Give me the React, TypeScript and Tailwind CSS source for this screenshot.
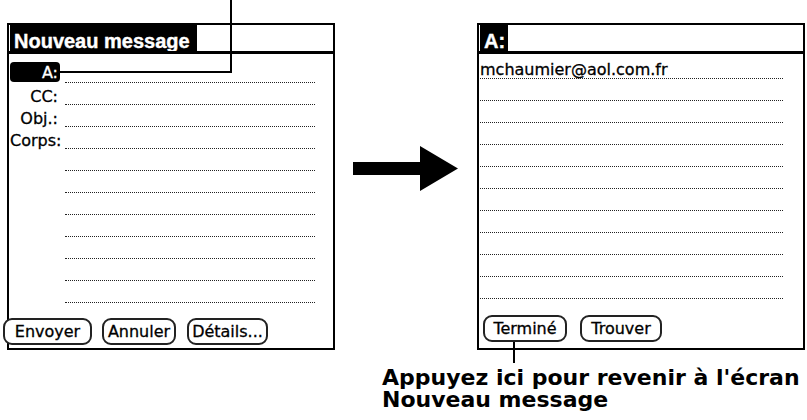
import React from "react";

const LEFT_LABELS = ["A:", "CC:", "Obj.:", "Corps:"];
const ROWS = Array.from({ length: 11 }, (_, i) => i);

function PalmButton({ label, width }: { label: string; width: string }) {
  return (
    <div
      className={`${width} h-[27px] flex items-center justify-center border-2 border-[#222] rounded-[9px] text-[16px] leading-none text-black bg-white`}
    >
      {label}
    </div>
  );
}

function TitleBar({ title, tabWidth }: { title: string; tabWidth: string }) {
  return (
    <>
      <div className="h-[26px] flex">
        <div
          className={`${tabWidth} ml-[1px] h-[26px] bg-black text-white font-['Liberation_Sans',Arial,sans-serif] font-bold text-[20px] leading-[20px] pt-[6px] pl-[4px] whitespace-nowrap [-webkit-text-stroke:0.4px_white]`}
        >
          {title}
        </div>
      </div>
      <div className="h-[3px] bg-black" />
    </>
  );
}

function NewMessageScreen() {
  return (
    <div className="w-[328px] h-[327px] border-2 border-black flex flex-col bg-white">
      <TitleBar title="Nouveau message" tabWidth="w-[187px]" />
      <div className="mt-[7px] flex flex-col">
        {ROWS.map((i) => {
          const label = LEFT_LABELS[i];
          return (
            <div key={i} className="h-[22px] flex">
              {i === 0 ? (
                <div className="ml-[1px] w-[50px] h-[20px] self-end mb-[1px] bg-black rounded-[4px] text-white flex items-end justify-end pr-[2px] leading-[16px] pb-[1px] [-webkit-text-stroke:0.3px_white]">
                  {label}
                </div>
              ) : (
                <div className="ml-[1px] w-[50px] self-end text-right pr-[2px] leading-[16px] whitespace-nowrap">
                  {label ?? ""}
                </div>
              )}
              <div className="ml-[5px] mr-[18px] flex-1 border-b border-dotted border-[#222]" />
            </div>
          );
        })}
      </div>
      <div className="mt-[15px] -ml-[6px] flex gap-[10px]">
        <PalmButton label="Envoyer" width="w-[89px]" />
        <PalmButton label="Annuler" width="w-[74px]" />
        <div className="ml-[1px]">
          <PalmButton label="Détails..." width="w-[81px]" />
        </div>
      </div>
    </div>
  );
}

function RecipientScreen() {
  return (
    <div className="w-[328px] h-[327px] border-2 border-black flex flex-col bg-white">
      <TitleBar title="A:" tabWidth="w-[28px]" />
      <div className="mt-[3px] flex flex-col">
        {ROWS.map((i) => (
          <div key={i} className="h-[22px] flex">
            <div className="ml-[1px] mr-[20px] flex-1 border-b border-dotted border-[#222] flex items-end leading-[16px] whitespace-nowrap">
              {i === 0 ? "mchaumier@aol.com.fr" : ""}
            </div>
          </div>
        ))}
      </div>
      <div className="mt-[16px] ml-[4px] flex gap-[13px]">
        <PalmButton label="Terminé" width="w-[84px]" />
        <PalmButton label="Trouver" width="w-[82px]" />
      </div>
    </div>
  );
}

export default function App() {
  return (
    <div className="relative w-[807px] h-[420px] bg-white overflow-hidden text-black font-['DejaVu_Sans',sans-serif] text-[16px] [-webkit-text-stroke:0.3px_black]">
      <div className="flex pt-[23px] pl-[7px]">
        <NewMessageScreen />
        <div className="ml-[18px] mt-[123px]">
          <svg width="105" height="45" viewBox="0 0 105 45">
            <rect x="0" y="16" width="68" height="13" fill="black" />
            <polygon points="67,0 105,22.5 67,45" fill="black" />
          </svg>
        </div>
        <div className="ml-[19px]">
          <RecipientScreen />
        </div>
      </div>

      <div className="ml-[382px] mt-[17px] font-['DejaVu_Sans',sans-serif] font-bold text-[22px] leading-[22px] whitespace-nowrap [-webkit-text-stroke:0px_black]">
        <div>Appuyez ici pour revenir à l'écran</div>
        <div>Nouveau message</div>
      </div>

      {/* callout lines */}
      <div className="absolute left-[230px] top-0 w-[2px] h-[73px] bg-black" />
      <div className="absolute left-[60px] top-[71px] w-[172px] h-[2px] bg-black" />
      <div className="absolute left-[513px] top-[342px] w-[2px] h-[21px] bg-black" />
    </div>
  );
}
